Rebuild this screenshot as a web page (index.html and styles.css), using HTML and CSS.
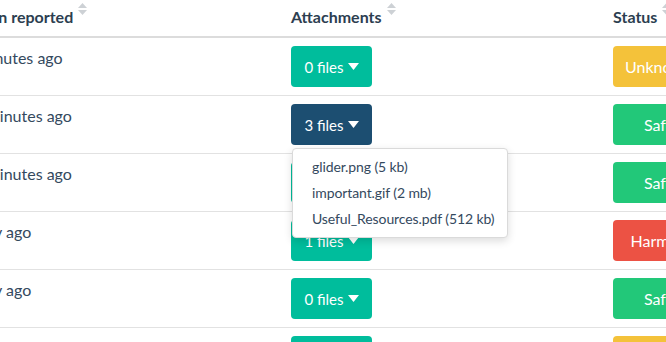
FILE: index.html
```html
<!DOCTYPE html>
<html lang="en">
<head>
  <meta charset="UTF-8" />
  <meta name="viewport" content="width=device-width, initial-scale=1.0" />
  <title>Reports</title>
  <link rel="stylesheet" href="styles.css">
</head>
<body>
  <div class="frame">
    <table class="reports">
      <colgroup>
        <col class="col-when">
        <col class="col-files">
        <col class="col-status">
      </colgroup>
      <thead>
        <tr>
          <th><span class="head">When reported <svg class="sort" viewBox="0 0 9 12"><path d="M0 5L4.5 0L9 5Z"/><path d="M0 7L9 7L4.5 12Z"/></svg></span></th>
          <th><span class="head">Attachments <svg class="sort" viewBox="0 0 9 12"><path d="M0 5L4.5 0L9 5Z"/><path d="M0 7L9 7L4.5 12Z"/></svg></span></th>
          <th><span class="head">Status <svg class="sort" viewBox="0 0 9 12"><path d="M0 5L4.5 0L9 5Z"/><path d="M0 7L9 7L4.5 12Z"/></svg></span></th>
        </tr>
      </thead>
      <tbody>
        <tr>
          <td>5 minutes ago</td>
          <td><button class="btn files">0 files <svg class="caret" viewBox="0 0 11 7"><path d="M0 0H11L5.5 7Z"/></svg></button></td>
          <td><button class="btn status unknown">Unknown</button></td>
        </tr>
        <tr>
          <td>15 minutes ago</td>
          <td>
            <div class="dropdown">
              <button class="btn files active">3 files <svg class="caret" viewBox="0 0 11 7"><path d="M0 0H11L5.5 7Z"/></svg></button>
              <ul class="menu">
                <li>glider.png (5 kb)</li>
                <li>important.gif (2 mb)</li>
                <li>Useful_Resources.pdf (512 kb)</li>
              </ul>
            </div>
          </td>
          <td><button class="btn status safe">Safe</button></td>
        </tr>
        <tr>
          <td>15 minutes ago</td>
          <td><button class="btn files">2 files <svg class="caret" viewBox="0 0 11 7"><path d="M0 0H11L5.5 7Z"/></svg></button></td>
          <td><button class="btn status safe">Safe</button></td>
        </tr>
        <tr>
          <td>1 day ago</td>
          <td><button class="btn files">1 files <svg class="caret" viewBox="0 0 11 7"><path d="M0 0H11L5.5 7Z"/></svg></button></td>
          <td><button class="btn status harmful">Harmful</button></td>
        </tr>
        <tr>
          <td>1 day ago</td>
          <td><button class="btn files">0 files <svg class="caret" viewBox="0 0 11 7"><path d="M0 0H11L5.5 7Z"/></svg></button></td>
          <td><button class="btn status safe">Safe</button></td>
        </tr>
        <tr>
          <td>2 days ago</td>
          <td><button class="btn files">0 files <svg class="caret" viewBox="0 0 11 7"><path d="M0 0H11L5.5 7Z"/></svg></button></td>
          <td><button class="btn status unknown">Unknown</button></td>
        </tr>
      </tbody>
    </table>
  </div>
</body>
</html>
```

FILE: styles.css
```css
body {
  margin: 0;
  background: #fff;
  color: #34495e;
  font-family: Lato, 'Source Sans Pro', Helvetica, Arial, sans-serif;
}
.frame {
  width: 666px;
  height: 342px;
  overflow: hidden;
}
.reports {
  border-collapse: collapse;
  table-layout: fixed;
  width: 799px;
  margin-left: -48px;
}
.col-when { width: 327px; }
.col-files { width: 322px; }
.col-status { width: 150px; }
th, td {
  padding: 8px 12px;
  text-align: left;
  vertical-align: top;
  font-size: 16px;
  line-height: 24px;
  white-space: nowrap;
}
th {
  padding: 5px 12px 7px;
  color: #2c3e50;
  font-weight: 700;
  border-bottom: 2px solid #dcdcdc;
}
td {
  border-bottom: 1px solid #e2e2e2;
}
.head {
  display: inline-flex;
  align-items: flex-start;
  gap: 5px;
}
.sort {
  width: 9px;
  height: 12px;
  margin-top: -2px;
  fill: #cdd1d5;
}
.btn {
  display: inline-flex;
  align-items: center;
  justify-content: center;
  vertical-align: top;
  height: 41px;
  padding: 0;
  border: 0;
  border-radius: 4px;
  color: #fff;
  font-family: inherit;
  font-size: 16px;
  cursor: pointer;
}
.files {
  width: 81px;
  gap: 4px;
  font-size: 15px;
  background: #00bd9c;
}
.files.active { background: #1c4e71; }
.caret {
  width: 11px;
  height: 7px;
  fill: #fff;
}
.status { width: 92px; }
.unknown { background: #f4c23a; }
.safe { background: #22c879; }
.harmful { background: #ec5244; }
.dropdown {
  position: relative;
  display: inline-block;
  vertical-align: top;
}
.menu {
  position: absolute;
  top: 44px;
  left: 1px;
  z-index: 20;
  width: 216px;
  box-sizing: border-box;
  margin: 0;
  padding: 5px 0;
  list-style: none;
  background: #fff;
  border: 1px solid #dadada;
  border-radius: 4px;
  box-shadow: 0 3px 8px rgba(0, 0, 0, 0.14);
}
.menu li {
  padding: 0 19px;
  font-size: 14px;
  letter-spacing: -0.1px;
  line-height: 26px;
  color: #34495e;
}
```
